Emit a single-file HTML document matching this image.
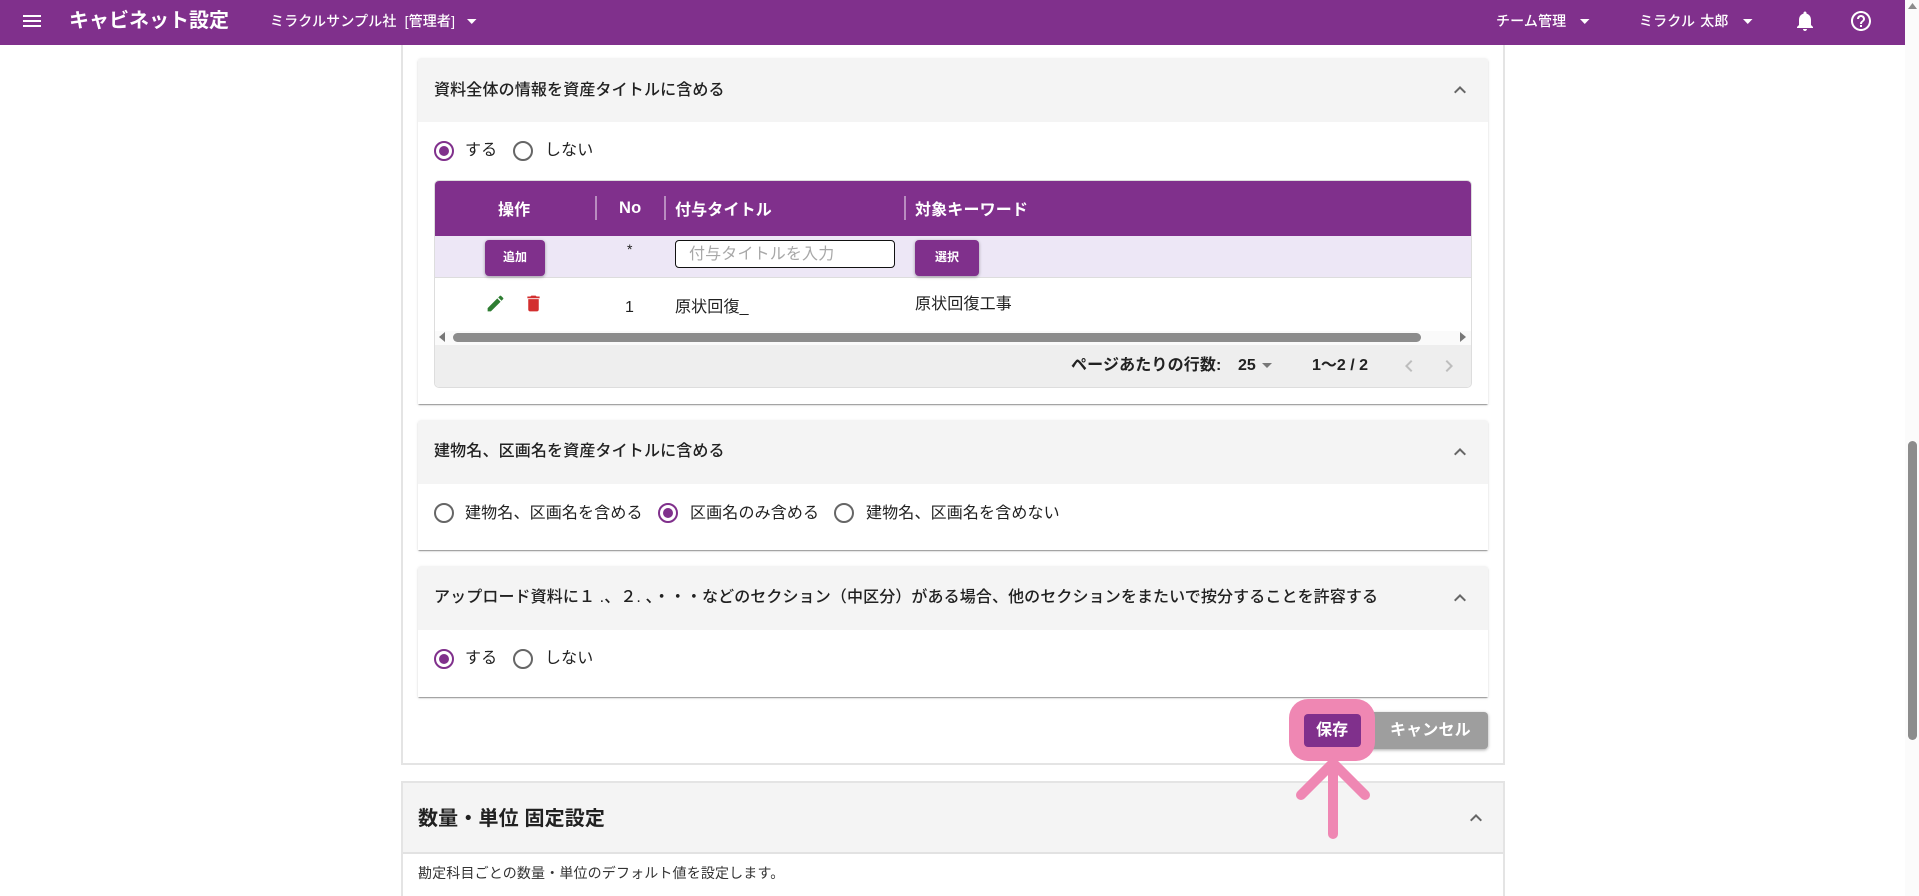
<!DOCTYPE html>
<html lang="ja">
<head>
<meta charset="utf-8">
<title>キャビネット設定</title>
<style>
html,body{margin:0;padding:0;background:#fff;width:1919px;height:896px;overflow:hidden;}
body{font-family:"Liberation Sans","Noto Sans CJK JP",sans-serif;color:#212121;font-size:16px;}
#p{position:absolute;left:0;top:0;width:1919px;height:896px;overflow:hidden;}
.a{position:absolute;box-sizing:border-box;}
.t{position:absolute;white-space:nowrap;line-height:24px;height:24px;letter-spacing:.15px;}
.w{color:#fff;}
.b{font-weight:700;}
.m{font-weight:500;}
svg{position:absolute;display:block;}
.r{position:absolute;width:20px;height:20px;border-radius:50%;border:2px solid #666;box-sizing:border-box;background:#fff;}
.r.on{border-color:#80308c;}
.r.on::after{content:"";position:absolute;left:3px;top:3px;width:10px;height:10px;border-radius:50%;background:#80308c;}
.card{position:absolute;left:418px;width:1070px;background:#fff;box-shadow:0 2px 1px -1px rgba(0,0,0,.25),0 1px 1px 0 rgba(0,0,0,.16),0 1px 3px 0 rgba(0,0,0,.1);border-radius:3px 3px 0 0;}
.head{position:absolute;left:418px;width:1070px;background:#f4f4f4;border-radius:3px 3px 0 0;}
.btn{position:absolute;background:#80308c;border-radius:4px;color:#fff;font-weight:700;text-align:center;box-shadow:0 1px 3px rgba(0,0,0,.35);}
.div{position:absolute;width:2px;top:196px;height:24px;background:#b98cc0;}
</style>
</head>
<body>
<div id="p">

<!-- container outline -->
<div class="a" style="left:401px;top:40px;width:1104px;height:725px;border:2px solid #e4e4e4;border-top:none;"></div>

<!-- Accordion cards -->
<div class="card" style="top:58px;height:346px;"></div>
<div class="head" style="top:58px;height:64px;"></div>
<div class="t m" style="left:434px;top:79px;">資料全体の情報を資産タイトルに含める</div>
<svg style="left:1448px;top:78px" width="24" height="24" viewBox="0 0 24 24"><path fill="#666" d="M12 8l-6 6 1.41 1.41L12 10.83l4.59 4.58L18 14z"/></svg>
<div class="r on" style="left:434px;top:141px;"></div>
<div class="t" style="left:465px;top:139px;">する</div>
<div class="r" style="left:513px;top:141px;"></div>
<div class="t" style="left:545px;top:139px;">しない</div>

<!-- Table -->
<div class="a" style="left:434px;top:180px;width:1038px;height:208px;border:1px solid #ddd;border-radius:5px;background:#fff;overflow:hidden;">
  <div class="a" style="left:0;top:0;width:1038px;height:55px;background:#80308c;"></div>
  <div class="a" style="left:0;top:55px;width:1038px;height:42px;background:#ede7f6;border-bottom:1px solid #ddd;"></div>
  <div class="a" style="left:0;top:150px;width:1038px;height:14px;background:#fafafa;"></div>
  <div class="a" style="left:0;top:164px;width:1038px;height:42px;background:#eee;"></div>
</div>
<div class="div" style="left:595px"></div>
<div class="div" style="left:664px"></div>
<div class="div" style="left:904px"></div>
<div class="t w b" style="left:498px;top:199px;">操作</div>
<div class="t w b" style="left:619px;top:196px;font-size:16.5px;">No</div>
<div class="t w b" style="left:675px;top:199px;">付与タイトル</div>
<div class="t w b" style="left:915px;top:199px;">対象キーワード</div>

<div class="btn" style="left:485px;top:240px;width:60px;height:36px;line-height:35px;font-size:12px;">追加</div>
<div class="t" style="left:627px;top:237px;font-size:14px;">*</div>
<div class="a" style="left:675px;top:240px;width:220px;height:28px;border:1.5px solid #111;border-radius:4px;background:#fff;"></div>
<div class="t" style="left:689px;top:243px;color:#a8a8a8;">付与タイトルを入力</div>
<div class="btn" style="left:915px;top:240px;width:64px;height:36px;line-height:35px;font-size:12px;">選択</div>

<svg style="left:485px;top:293px" width="21" height="21" viewBox="0 0 24 24"><path fill="#2e7d32" d="M3 17.25V21h3.75L17.81 9.94l-3.75-3.75L3 17.25zM20.71 7.04c.39-.39.39-1.02 0-1.41l-2.34-2.34c-.39-.39-1.02-.39-1.41 0l-1.83 1.83 3.75 3.75 1.83-1.83z"/></svg>
<svg style="left:523px;top:293px" width="21" height="21" viewBox="0 0 24 24"><path fill="#d32f2f" d="M6 19c0 1.1.9 2 2 2h8c1.1 0 2-.9 2-2V7H6v12zM19 4h-3.5l-1-1h-5l-1 1H5v2h14V4z"/></svg>
<div class="t" style="left:625px;top:296px;">1</div>
<div class="t" style="left:675px;top:296px;">原状回復_</div>
<div class="t" style="left:915px;top:293px;">原状回復工事</div>

<!-- table scrollbar -->
<svg style="left:438px;top:332px" width="8" height="11" viewBox="0 0 8 11"><path fill="#777" d="M7 0v10L1 5z"/></svg>
<div class="a" style="left:453px;top:333px;width:968px;height:9px;background:#8c8c8c;border-radius:5px;"></div>
<svg style="left:1459px;top:332px" width="8" height="11" viewBox="0 0 8 11"><path fill="#777" d="M1 0v10l6-5z"/></svg>

<!-- pagination -->
<div class="t b" style="left:1071px;top:354px;color:#222;">ページあたりの行数:</div>
<div class="t b" style="left:1238px;top:354px;color:#222;letter-spacing:0;">25</div>
<svg style="left:1262px;top:363px" width="10" height="6" viewBox="0 0 10 6"><path fill="#777" d="M0 0h10L5 5z"/></svg>
<div class="t b" style="left:1312px;top:354px;color:#222;letter-spacing:0;">1〜2 / 2</div>
<svg style="left:1397px;top:354px" width="24" height="24" viewBox="0 0 24 24"><path fill="#bdbdbd" d="M15.41 7.41L14 6l-6 6 6 6 1.41-1.41L10.83 12z"/></svg>
<svg style="left:1437px;top:354px" width="24" height="24" viewBox="0 0 24 24"><path fill="#bdbdbd" d="M10 6L8.59 7.41 13.17 12l-4.58 4.59L10 18l6-6z"/></svg>

<!-- Accordion 2 -->
<div class="card" style="top:420px;height:130px;"></div>
<div class="head" style="top:420px;height:64px;"></div>
<div class="t m" style="left:434px;top:440px;">建物名、区画名を資産タイトルに含める</div>
<svg style="left:1448px;top:440px" width="24" height="24" viewBox="0 0 24 24"><path fill="#666" d="M12 8l-6 6 1.41 1.41L12 10.83l4.59 4.58L18 14z"/></svg>
<div class="r" style="left:434px;top:503px;"></div>
<div class="t" style="left:465px;top:502px;">建物名、区画名を含める</div>
<div class="r on" style="left:658px;top:503px;"></div>
<div class="t" style="left:690px;top:502px;">区画名のみ含める</div>
<div class="r" style="left:834px;top:503px;"></div>
<div class="t" style="left:866px;top:502px;">建物名、区画名を含めない</div>

<!-- Accordion 3 -->
<div class="card" style="top:566px;height:131px;"></div>
<div class="head" style="top:566px;height:64px;"></div>
<div class="t m" style="left:434px;top:586px;letter-spacing:.11px;">アップロード資料に１ .、２. 、・・・などのセクション（中区分）がある場合、他のセクションをまたいで按分することを許容する</div>
<svg style="left:1448px;top:586px" width="24" height="24" viewBox="0 0 24 24"><path fill="#666" d="M12 8l-6 6 1.41 1.41L12 10.83l4.59 4.58L18 14z"/></svg>
<div class="r on" style="left:434px;top:649px;"></div>
<div class="t" style="left:465px;top:647px;">する</div>
<div class="r" style="left:513px;top:649px;"></div>
<div class="t" style="left:545px;top:647px;">しない</div>

<!-- Buttons -->
<div class="a" style="left:1360px;top:712px;width:128px;height:37px;background:#9e9e9e;border-radius:4px;box-shadow:0 1px 3px rgba(0,0,0,.35);"></div>
<div class="t w b" style="left:1390px;top:719px;">キャンセル</div>
<div class="a" style="left:1289px;top:699px;width:86px;height:62px;background:#ef87b3;border-radius:19px;"></div>
<div class="a" style="left:1304px;top:714px;width:57px;height:33px;background:#80308c;border-radius:4px;"></div>
<div class="t w b" style="left:1316px;top:719px;">保存</div>

<!-- Last panel -->
<div class="a" style="left:401px;top:781px;width:1104px;height:115px;border:2px solid #e4e4e4;border-bottom:none;background:#fff;"></div>
<div class="a" style="left:403px;top:783px;width:1100px;height:71px;background:#f4f4f4;border-bottom:2px solid #e2e2e2;"></div>
<div class="t b" style="left:418px;top:807px;font-size:20px;">数量・単位 固定設定</div>
<svg style="left:1464px;top:806px" width="24" height="24" viewBox="0 0 24 24"><path fill="#666" d="M12 8l-6 6 1.41 1.41L12 10.83l4.59 4.58L18 14z"/></svg>
<div class="t" style="left:418px;top:861px;font-size:14px;color:#333;">勘定科目ごとの数量・単位のデフォルト値を設定します。</div>

<!-- Arrow annotation -->
<svg style="left:1280px;top:750px" width="100" height="100" viewBox="1280 750 100 100"><path d="M1333 765V834M1301 795L1333 763L1365 795" fill="none" stroke="#ef87b3" stroke-width="10" stroke-linecap="round" stroke-linejoin="round"/></svg>

<!-- Header -->
<div class="a" style="left:0;top:0;width:1905px;height:45px;background:#80308c;"></div>
<svg style="left:20px;top:9px" width="24" height="24" viewBox="0 0 24 24"><path fill="#fff" d="M3 18h18v-2H3v2zm0-5h18v-2H3v2zm0-7v2h18V6H3z"/></svg>
<div class="t w b" style="left:69px;top:9px;font-size:20px;letter-spacing:0;">キャビネット設定</div>
<div class="t w m" style="left:270px;top:9px;font-size:14px;">ミラクルサンプル社&nbsp;&nbsp;[管理者]</div>
<svg style="left:467px;top:19px" width="10" height="6" viewBox="0 0 10 6"><path fill="#fff" d="M0 0h9.5L4.75 5z"/></svg>
<div class="t w m" style="left:1496px;top:9px;font-size:14px;">チーム管理</div>
<svg style="left:1580px;top:19px" width="10" height="6" viewBox="0 0 10 6"><path fill="#fff" d="M0 0h9.5L4.75 5z"/></svg>
<div class="t w m" style="left:1639px;top:9px;font-size:14px;word-spacing:1px;">ミラクル 太郎</div>
<svg style="left:1743px;top:19px" width="10" height="6" viewBox="0 0 10 6"><path fill="#fff" d="M0 0h9.5L4.75 5z"/></svg>
<svg style="left:1793px;top:9px" width="24" height="24" viewBox="0 0 24 24"><path fill="#fff" d="M12 22c1.1 0 2-.9 2-2h-4c0 1.1.89 2 2 2zm6-6v-5c0-3.07-1.64-5.64-4.5-6.32V4c0-.83-.67-1.5-1.5-1.5s-1.5.67-1.5 1.5v.68C7.63 5.36 6 7.92 6 11v5l-2 2v1h16v-1l-2-2z"/></svg>
<svg style="left:1849px;top:9px" width="24" height="24" viewBox="0 0 24 24"><path fill="#fff" d="M11 18h2v-2h-2v2zm1-16C6.48 2 2 6.48 2 12s4.48 10 10 10 10-4.48 10-10S17.52 2 12 2zm0 18c-4.41 0-8-3.59-8-8s3.59-8 8-8 8 3.59 8 8-3.59 8-8 8zm0-14c-2.21 0-4 1.79-4 4h2c0-1.1.9-2 2-2s2 .9 2 2c0 2-3 1.75-3 5h2c0-2.25 3-2.5 3-5 0-2.21-1.79-4-4-4z"/></svg>

<!-- Page scrollbar -->
<div class="a" style="left:1905px;top:0;width:14px;height:896px;background:#fbfbfb;"></div>
<svg style="left:1907px;top:2px" width="11" height="8" viewBox="0 0 11 8"><path fill="#8c8c8c" d="M5.5 1L10 7H1z"/></svg>
<div class="a" style="left:1908px;top:441px;width:9px;height:299px;background:#8c8c8c;border-radius:5px;"></div>

</div>
</body>
</html>
